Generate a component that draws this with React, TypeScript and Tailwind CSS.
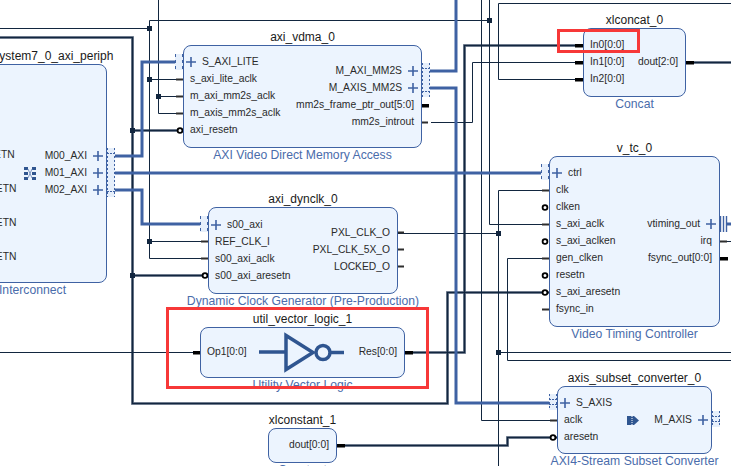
const DARK = "#12263f";
const BLUE = "#3f62a3";

type Port = { name: string; plus?: boolean };

type BlockProps = {
  pos: string;
  title: string;
  caption: string;
  left?: Port[];
  right?: Port[];
  leftPad?: string;
  rightPad?: string;
};

const PlusMark = () => (
  <svg width="10" height="10" viewBox="0 0 10 10" className="shrink-0">
    <path d="M0 5H10M5 0V10" stroke="#3f62a3" strokeWidth="1.6" fill="none" />
  </svg>
);

const Block = ({ pos, title, caption, left = [], right = [], leftPad, rightPad }: BlockProps) => (
  <div
    className={`absolute box-border rounded-[8px] border border-[#3f62a3] bg-[#ecf4fe] flex justify-between ${pos}`}
  >
    <div className="absolute bottom-full left-1/2 -translate-x-1/2 mb-[2px] whitespace-nowrap text-[12px] leading-[14px] text-[#1a1a1a]">
      {title}
    </div>
    <div className="absolute top-full left-1/2 -translate-x-1/2 mt-[1px] whitespace-nowrap text-[12.2px] leading-[14px] text-[#4a6cab]">
      {caption}
    </div>
    <div className={`flex flex-col pl-[6px] ${leftPad ?? ""}`}>
      {left.map((p) => (
        <div
          key={p.name}
          className={`h-[17px] flex items-center gap-[6px] whitespace-nowrap text-[10.3px] text-[#2a2a2a] ${p.plus ? "-ml-[4px]" : ""}`}
        >
          {p.plus && <PlusMark />}
          {p.name}
        </div>
      ))}
    </div>
    <div className={`flex flex-col items-end pr-[7px] ${rightPad ?? ""}`}>
      {right.map((p) => (
        <div
          key={p.name}
          className={`h-[17px] flex items-center gap-[6px] whitespace-nowrap text-[10.3px] text-[#2a2a2a] ${p.plus ? "-mr-[4px]" : ""}`}
        >
          {p.name}
          {p.plus && <PlusMark />}
        </div>
      ))}
    </div>
  </div>
);

// wires drawn under the blocks
const thin = [
  "M0 28.5H149.5",
  "M149.5 20.5V258.5H208",
  "M149.5 79.5H183",
  "M149.5 20.5H489.5",
  "M149.5 241.5H208",
  "M158.5 0V113.5H183",
  "M158.5 96.5H183",
  "M489.5 0V224.5H549",
  "M498.5 3.5H731",
  "M498.5 3.5V79.5H584",
  "M431 122.5H472.5V62.5H584",
  "M481.5 0V420.5H557",
  "M397 233.5H498.5",
  "M498.5 190.5V466",
  "M498.5 190.5H549",
  "M507.5 258.5H549",
  "M507.5 258.5V360.5H731",
  "M498.5 352.5H731",
  "M0 352.5H200",
  "M712 241.5H731",
];

const thick = [
  "M0 37.5H132.5V403.5H447.5V292.5H549",
  "M132.5 130.5H183",
  "M132.5 275.5H208",
  "M405 352.5H464.5V45.5H584",
  "M337 445.5H507.5V437.5H557",
  "M686 62.5H731",
];

const bus = [
  "M175 62H142V156H115",
  "M115 173H542",
  "M115 190H142V224H200",
  "M430 71H456V0",
  "M430 88H456V403H549",
  "M726 224H731",
];

const junctions: [number, number][] = [
  [149.5, 28.5],
  [149.5, 79.5],
  [158.5, 96.5],
  [132.5, 130.5],
  [149.5, 241.5],
  [132.5, 275.5],
  [489.5, 20.5],
  [498.5, 233.5],
  [498.5, 352.5],
];

// clock style pins
const stubs: [number, number][] = [
  [176, 79],
  [176, 96],
  [176, 113],
  [201, 241],
  [201, 258],
  [397, 232],
  [397, 249],
  [397, 266],
  [421, 122],
  [542, 190],
  [542, 224],
  [542, 258],
  [542, 309],
  [550, 420],
  [720, 241],
];

const dataPins: [number, number][] = [
  [421, 105],
  [193, 352],
  [405, 352],
  [337, 445],
  [575, 45],
  [575, 62],
  [575, 79],
  [686, 62],
  [720, 258],
];

const resets: [number, number][] = [
  [180, 130],
  [205, 275],
  [545, 207],
  [545, 241],
  [545, 275],
  [545, 292],
  [553, 437],
];

// x, y, height of the dashed bus connectors
const slavePorts: [number, number, number][] = [
  [175, 54, 16],
  [200, 216, 16],
  [541, 164, 16],
];

const masterPorts: [number, number, number][] = [
  [422, 63, 34],
  [107, 148, 49],
  [549, 394, 16],
  [712, 411, 16],
];

const Wires = () => (
  <svg width="731" height="466" className="absolute left-0 top-0">
    {thick.map((d) => (
      <path key={d} d={d} fill="none" stroke="#8f99a8" strokeWidth="3" />
    ))}
    {thick.map((d) => (
      <path key={d} d={d} fill="none" stroke={DARK} strokeWidth="1.7" />
    ))}
    {thin.map((d) => (
      <path key={d} d={d} fill="none" stroke={DARK} strokeWidth="1" />
    ))}
    {bus.map((d) => (
      <path key={d} d={d} fill="none" stroke={BLUE} strokeWidth="3" />
    ))}
    {junctions.map(([x, y]) => (
      <rect key={`${x}-${y}`} x={x - 2.5} y={y - 2.5} width="5" height="5" fill={DARK} />
    ))}
    {stubs.map(([x, y]) => (
      <rect key={`${x}-${y}`} x={x} y={y - 0.5} width="7" height="2" fill="#2e2e2e" />
    ))}
    {dataPins.map(([x, y]) => (
      <rect key={`${x}-${y}`} x={x} y={y - 1} width="8" height="3.5" fill="#000" />
    ))}
    {resets.map(([x, y]) => (
      <circle key={`${x}-${y}`} cx={x} cy={y + 0.5} r="2.4" fill="#fff" stroke="#000" strokeWidth="1.8" />
    ))}
    {slavePorts.map(([x, y, h]) => (
      <g key={`${x}-${y}`}>
        <rect x={x} y={y} width="8" height={h} fill="#e6effb" />
        <path
          d={`M${x + 0.5} ${y}V${y + h}M${x + 7.5} ${y}V${y + h}`}
          stroke={BLUE}
          strokeWidth="1"
          strokeDasharray="3 3"
          fill="none"
        />
      </g>
    ))}
    {masterPorts.map(([x, y, h]) => (
      <g key={`${x}-${y}`}>
        <rect x={x} y={y} width="8" height={h} fill="#e6effb" />
        <path
          d={`M${x + 0.5} ${y}V${y + h}M${x + 7.5} ${y}V${y + h}`}
          stroke={BLUE}
          strokeWidth="1"
          strokeDasharray="2 2"
          fill="none"
        />
        <path
          d={`M${x} ${y + 5.5}H${x + 8}M${x} ${y + h - 5.5}H${x + 8}`}
          stroke={BLUE}
          strokeWidth="1"
          strokeDasharray="2 1"
          fill="none"
        />
      </g>
    ))}
    <path d="M720.5 216V232M723.5 216V232M726.5 216V232" stroke={BLUE} strokeWidth="1.4" fill="none" />
  </svg>
);

// inverter symbol and small block icons, above the blocks
const Icons = () => (
  <svg width="731" height="466" className="absolute left-0 top-0">
    <g fill="none" stroke="#2f5590" strokeWidth="3.5">
      <path d="M259 352H286" />
      <path d="M286 335.5V369.5L313 352.5Z" />
      <circle cx="323" cy="352.5" r="7" />
      <path d="M331 352.5H344" />
    </g>
    <path d="M627 416H634L639 420.5L634 425H627Z" fill="#2f5590" />
    <path d="M632 414V427" stroke="#fff" strokeWidth="1" strokeDasharray="1 1" />
    <g fill="#2f5590">
      <rect x="24" y="167" width="4" height="3" />
      <rect x="32" y="167" width="4" height="3" />
      <rect x="24" y="172" width="4" height="3" />
      <rect x="32" y="172" width="4" height="3" />
      <rect x="24" y="177" width="4" height="3" />
      <rect x="32" y="177" width="4" height="3" />
    </g>
    <path d="M28 169L32 178M32 169L28 178" stroke="#7f98c4" strokeWidth="1" fill="none" />
  </svg>
);

const App = () => {
  return (
    <div className="relative w-[731px] h-[466px] overflow-hidden bg-white font-['Liberation_Sans',Arial,sans-serif]">
      <Wires />

      <Block
        pos="left-[-65px] top-[64px] w-[172px] h-[219px]"
        title="processing_system7_0_axi_periph"
        caption="AXI Interconnect"
        leftPad="pt-[13px]"
        rightPad="pt-[82px]"
        left={[
          { name: "S00_AXI" },
          { name: "ACLK" },
          { name: "ARESETN" },
          { name: "S00_ACLK" },
          { name: "S00_ARESETN" },
          { name: "M00_ACLK" },
          { name: "M00_ARESETN" },
          { name: "M01_ACLK" },
          { name: "M01_ARESETN" },
          { name: "M02_ACLK" },
          { name: "M02_ARESETN" },
        ]}
        right={[
          { name: "M00_AXI", plus: true },
          { name: "M01_AXI", plus: true },
          { name: "M02_AXI", plus: true },
        ]}
      />

      <Block
        pos="left-[183px] top-[45px] w-[239px] h-[103px]"
        title="axi_vdma_0"
        caption="AXI Video Direct Memory Access"
        leftPad="pt-[7px]"
        rightPad="pt-[16px]"
        left={[
          { name: "S_AXI_LITE", plus: true },
          { name: "s_axi_lite_aclk" },
          { name: "m_axi_mm2s_aclk" },
          { name: "m_axis_mm2s_aclk" },
          { name: "axi_resetn" },
        ]}
        right={[
          { name: "M_AXI_MM2S", plus: true },
          { name: "M_AXIS_MM2S", plus: true },
          { name: "mm2s_frame_ptr_out[5:0]" },
          { name: "mm2s_introut" },
        ]}
      />

      <Block
        pos="left-[208px] top-[207px] w-[190px] h-[87px]"
        title="axi_dynclk_0"
        caption="Dynamic Clock Generator (Pre-Production)"
        leftPad="pt-[8px]"
        rightPad="pt-[16px]"
        left={[
          { name: "s00_axi", plus: true },
          { name: "REF_CLK_I" },
          { name: "s00_axi_aclk" },
          { name: "s00_axi_aresetn" },
        ]}
        right={[{ name: "PXL_CLK_O" }, { name: "PXL_CLK_5X_O" }, { name: "LOCKED_O" }]}
      />

      <Block
        pos="left-[200px] top-[327px] w-[205px] h-[51px]"
        title="util_vector_logic_1"
        caption="Utility Vector Logic"
        leftPad="pt-[15px]"
        rightPad="pt-[15px]"
        left={[{ name: "Op1[0:0]" }]}
        right={[{ name: "Res[0:0]" }]}
      />

      <Block
        pos="left-[268px] top-[428px] w-[69px] h-[35px]"
        title="xlconstant_1"
        caption="Constant"
        rightPad="pt-[7px]"
        right={[{ name: "dout[0:0]" }]}
      />

      <Block
        pos="left-[583px] top-[28px] w-[103px] h-[69px]"
        title="xlconcat_0"
        caption="Concat"
        leftPad="pt-[7px]"
        rightPad="pt-[24px]"
        left={[{ name: "In0[0:0]" }, { name: "In1[0:0]" }, { name: "In2[0:0]" }]}
        right={[{ name: "dout[2:0]" }]}
      />

      <Block
        pos="left-[549px] top-[156px] w-[171px] h-[171px]"
        title="v_tc_0"
        caption="Video Timing Controller"
        leftPad="pt-[7px]"
        rightPad="pt-[58px]"
        left={[
          { name: "ctrl", plus: true },
          { name: "clk" },
          { name: "clken" },
          { name: "s_axi_aclk" },
          { name: "s_axi_aclken" },
          { name: "gen_clken" },
          { name: "resetn" },
          { name: "s_axi_aresetn" },
          { name: "fsync_in" },
        ]}
        right={[{ name: "vtiming_out", plus: true }, { name: "irq" }, { name: "fsync_out[0:0]" }]}
      />

      <Block
        pos="left-[557px] top-[386px] w-[155px] h-[68px]"
        title="axis_subset_converter_0"
        caption="AXI4-Stream Subset Converter"
        leftPad="pt-[7px]"
        rightPad="pt-[24px]"
        left={[{ name: "S_AXIS", plus: true }, { name: "aclk" }, { name: "aresetn" }]}
        right={[{ name: "M_AXIS", plus: true }]}
      />

      <Icons />

      {/* red highlight boxes */}
      <div className="absolute left-[166px] top-[307px] w-[263px] h-[82px] border-[3px] border-[#f73838]" />
      <div className="absolute left-[557px] top-[29px] w-[83px] h-[24px] border-[3px] border-[#f73838]" />
    </div>
  );
};

export default App;
